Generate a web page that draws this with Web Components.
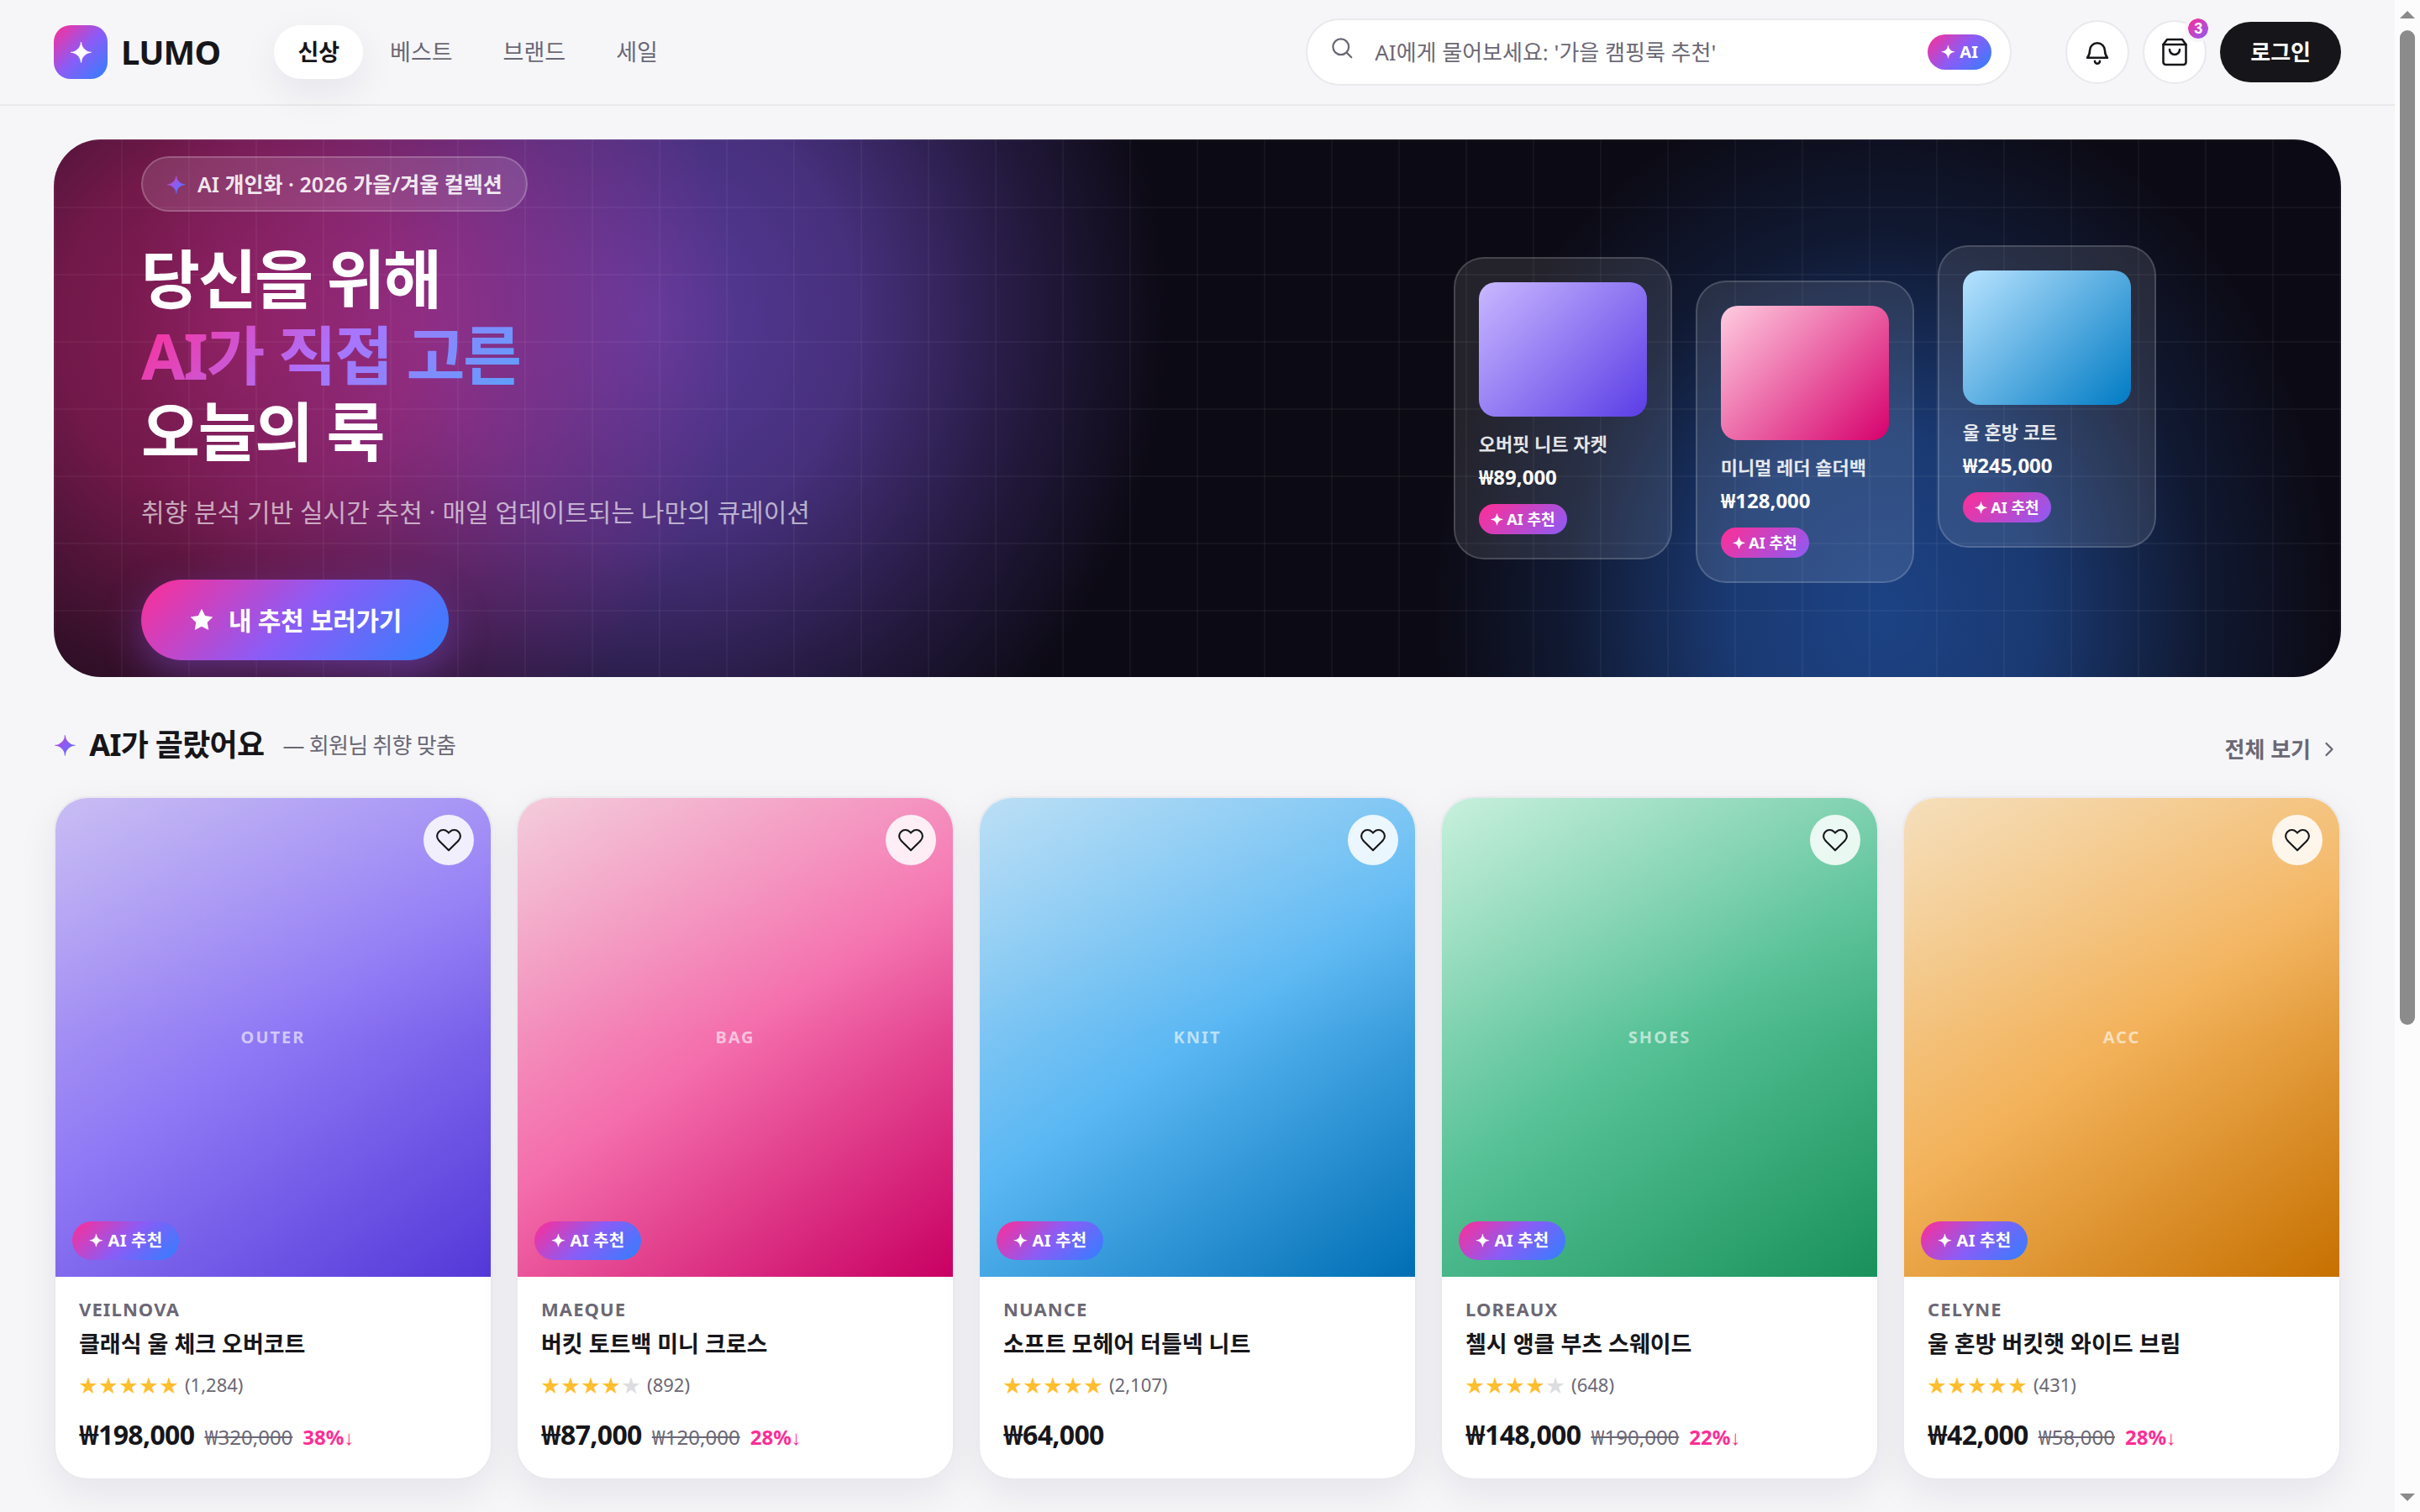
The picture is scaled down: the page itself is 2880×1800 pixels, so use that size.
<!DOCTYPE html>
<html lang="ko">
<head>
<meta charset="UTF-8">
<meta name="viewport" content="width=device-width, initial-scale=1.0">
<title>LUMO</title>
<style>
    :root {
        --ink: #16161a;
        --muted: #6b6875;
        --line: #e9e9ee;
        --bg: #f6f6f9;
        --pink: #ff2d95;
        --violet: #8b5cf6;
        --blue: #2f80ff;
        --grad: linear-gradient(135deg, #ff2d95 0%, #8b5cf6 50%, #2f80ff 100%);
        --shadow: 0 16px 48px rgba(20, 20, 40, 0.07);
    }
    body {
        margin: 0;
        height: 100vh;
        overflow: hidden;
        display: grid;
        grid-template-columns: minmax(0, 1fr) 30px;
        background: var(--bg);
        color: var(--ink);
        font-family: "Noto Sans", "Noto Sans CJK KR", sans-serif;
        font-size: 28px;
        line-height: 1.5;
    }
</style>
</head>
<body>
<lumo-shop></lumo-shop>
<scroll-rail></scroll-rail>

<script>
const BASE = `
    *, *::before, *::after { box-sizing: border-box; }
    button, input { font: inherit; color: inherit; border: 0; background: none; padding: 0; margin: 0; }
    button { cursor: pointer; }
    a { color: inherit; text-decoration: none; }
    h1, h2, h3, p { margin: 0; }
    svg { display: block; flex: none; }
`;

class BaseElement extends HTMLElement {
    constructor() {
        super();
        this.attachShadow({ mode: 'open' });
    }

    connectedCallback() {
        this.shadowRoot.innerHTML = `<style>${BASE}${this.styles()}</style>${this.markup()}`;
    }
}

// Gradient pill: size is "sm" (hero cards), "search", or nothing for products
class AiChip extends BaseElement {
    styles() {
        return `
            :host { display: inline-flex; align-items: center; border-radius: 999px; background: var(--grad); color: #fff; font-weight: 700; font-size: 20px; letter-spacing: 0.01em; height: 46px; padding: 0 20px; white-space: nowrap; }
            :host([size="sm"]) { font-size: 18px; letter-spacing: 0; height: 36px; padding: 0 14px; background: linear-gradient(135deg, var(--pink), var(--violet)); }
            :host([size="search"]) { height: 42px; padding: 0 16px; }
        `;
    }

    markup() {
        return `<span>✦ <slot></slot></span>`;
    }
}

class SiteHeader extends BaseElement {
    styles() {
        return `
            :host { display: flex; align-items: center; gap: 64px; padding: 22px 64px; border-bottom: 2px solid var(--line); }
            .logo { display: flex; align-items: center; gap: 16px; font-size: 40px; font-weight: 700; letter-spacing: -0.02em; line-height: 1; }
            .mark { display: grid; place-items: center; width: 64px; height: 64px; border-radius: 20px; background: var(--grad); color: #fff; font-size: 32px; letter-spacing: 0; }
            nav { display: flex; gap: 4px; margin-right: auto; }
            nav a { display: flex; align-items: center; height: 64px; padding: 0 28px; border-radius: 32px; font-size: 27px; color: var(--muted); }
            nav a.on { background: #fff; color: var(--ink); font-weight: 700; box-shadow: var(--shadow); }
            .search { display: flex; align-items: center; gap: 24px; width: 840px; height: 80px; padding: 0 22px 0 26px; border: 2px solid var(--line); border-radius: 40px; background: #fff; }
            .search svg { color: var(--muted); align-self: flex-start; margin-top: 18px; }
            .search input { flex: 1; min-width: 0; outline: 0; font-size: 26px; }
            .search input::placeholder { color: var(--muted); opacity: 1; }
            .actions { display: flex; align-items: center; gap: 16px; }
            .icon { position: relative; display: grid; place-items: center; width: 76px; height: 76px; border: 2px solid var(--line); border-radius: 50%; background: #fff; }
            .count { position: absolute; top: -8px; right: -8px; display: grid; place-items: center; width: 32px; height: 32px; border: 4px solid var(--bg); border-radius: 50%; background: linear-gradient(135deg, var(--pink), var(--violet)) padding-box; color: #fff; font-family: "Liberation Sans", sans-serif; font-size: 18px; font-weight: 700; line-height: 1; }
            .login { height: 72px; padding: 0 36px; border-radius: 36px; background: var(--ink); color: #fff; font-size: 26px; font-weight: 700; }
        `;
    }

    markup() {
        return `
            <a class="logo" href="#"><span class="mark">✦</span>LUMO</a>
            <nav>
                <a class="on" href="#">신상</a>
                <a href="#">베스트</a>
                <a href="#">브랜드</a>
                <a href="#">세일</a>
            </nav>
            <label class="search">
                <svg width="30" height="30" viewBox="0 0 24 24" fill="none" stroke="currentColor" stroke-width="1.8" stroke-linecap="round"><circle cx="11" cy="11" r="7.5"/><path d="m21 21-4.5-4.5"/></svg>
                <input type="search" aria-label="AI 검색" placeholder="AI에게 물어보세요: '가을 캠핑룩 추천'">
                <ai-chip size="search">AI</ai-chip>
            </label>
            <div class="actions">
                <button class="icon" aria-label="알림">
                    <svg width="36" height="36" viewBox="0 0 24 24" fill="none" stroke="currentColor" stroke-width="1.7" stroke-linecap="round" stroke-linejoin="round"><path d="M6 10.800a6 6 0 0 1 12 0c0 3 .7 4.200 2 5.700H4c1.300-1.500 2-2.700 2-5.700z"/><path d="M10 19.200a2 2 0 0 0 4 0"/></svg>
                </button>
                <button class="icon" aria-label="장바구니">
                    <svg width="36" height="36" viewBox="0 0 24 24" fill="none" stroke="currentColor" stroke-width="1.7" stroke-linecap="round" stroke-linejoin="round"><path d="M6 2 3 6v14a2 2 0 0 0 2 2h14a2 2 0 0 0 2-2V6l-3-4z"/><path d="M3 6h18"/><path d="M16 10a4 4 0 0 1-8 0"/></svg>
                    <span class="count">3</span>
                </button>
                <button class="login">로그인</button>
            </div>
        `;
    }
}

class PickCard extends BaseElement {
    styles() {
        return `
            :host { display: block; width: 260px; padding: 28px; border: 2px solid rgba(255, 255, 255, 0.16); border-radius: 36px; background: rgba(255, 255, 255, 0.1); color: #fff; }
            .thumb { height: 160px; margin-bottom: 14px; border-radius: 20px; background: linear-gradient(135deg, var(--from), var(--to)); }
            h3 { font-size: 22px; line-height: 36px; font-weight: 600; color: rgba(255, 255, 255, 0.88); white-space: nowrap; }
            p { margin: 4px 0 14px; font-size: 24px; line-height: 36px; font-weight: 700; }
            ai-chip { display: flex; width: fit-content; }
        `;
    }

    markup() {
        return `
            <div class="thumb"></div>
            <h3><slot></slot></h3>
            <p>${this.getAttribute('price')}</p>
            <ai-chip size="sm">AI 추천</ai-chip>
        `;
    }
}

class HeroBanner extends BaseElement {
    styles() {
        return `
            :host {
                display: grid; grid-template-columns: 1.3fr 1fr; gap: 56px; align-items: center;
                height: 640px; padding: 0 104px; border-radius: 56px; overflow: hidden; color: #fff;
                background:
                    linear-gradient(rgba(255, 255, 255, 0.04) 2px, transparent 2px) 0 0 / 80px 80px,
                    linear-gradient(90deg, rgba(255, 255, 255, 0.04) 2px, transparent 2px) 0 0 / 80px 80px,
                    radial-gradient(600px 600px at 8% 35%, rgba(255, 45, 149, 0.5), rgba(255, 45, 149, 0.42) 35%, rgba(255, 45, 149, 0.16) 72%, rgba(255, 45, 149, 0)),
                    radial-gradient(620px 660px at 26% 33%, rgba(139, 92, 246, 0.6), rgba(139, 92, 246, 0.46) 40%, rgba(139, 92, 246, 0.18) 74%, rgba(139, 92, 246, 0)),
                    radial-gradient(540px 640px at 80% 88%, rgba(47, 128, 255, 0.48), rgba(47, 128, 255, 0.4) 34%, rgba(47, 128, 255, 0.13) 70%, rgba(47, 128, 255, 0)),
                    #0c0a14;
            }
            .tag { display: flex; align-items: center; gap: 14px; width: fit-content; height: 66px; padding: 0 28px; border: 2px solid rgba(255, 255, 255, 0.2); border-radius: 33px; background: rgba(255, 255, 255, 0.12); color: rgba(255, 255, 255, 0.9); font-size: 25px; line-height: 30px; font-weight: 600; }
            .tag i { font-style: normal; font-size: 28px; line-height: 1; background: var(--grad); background-clip: text; color: transparent; }
            h1 { margin: 34px 0 28px; font-size: 76px; line-height: 91px; font-weight: 700; letter-spacing: -0.03em; }
            h1 span { display: block; width: fit-content; background: linear-gradient(135deg, #ff2d95, #a974ff 50%, #5aa2ff); background-clip: text; color: transparent; }
            .copy { margin-bottom: 58px; font-size: 30px; line-height: 45px; color: rgba(255, 255, 255, 0.65); }
            .cta { display: flex; align-items: center; gap: 16px; height: 96px; padding: 0 56px; border-radius: 48px; background: var(--grad); font-size: 30px; font-weight: 700; letter-spacing: -0.01em; box-shadow: 0 16px 48px rgba(139, 92, 246, 0.4); }
            .picks { display: flex; justify-content: center; align-items: flex-start; gap: 28px; padding-top: 14px; }
            pick-card:nth-child(1) { margin-top: 14px; --from: #c9b8ff; --to: #5b3de6; }
            pick-card:nth-child(2) { margin-top: 42px; --from: #ffcce0; --to: #d6006c; }
            pick-card:nth-child(3) { --from: #b8e3ff; --to: #007bc4; }
        `;
    }

    markup() {
        return `
            <div>
                <div class="tag"><i>✦</i>AI 개인화 · 2026 가을/겨울 컬렉션</div>
                <h1>당신을 위해<span>AI가 직접 고른</span>오늘의 룩</h1>
                <p class="copy">취향 분석 기반 실시간 추천 · 매일 업데이트되는 나만의 큐레이션</p>
                <button class="cta">
                    <svg width="32" height="32" viewBox="0 0 24 24" fill="currentColor"><path d="m12 2 3.100 6.300 6.900 1-5 4.900 1.200 6.800-6.200-3.200L5.800 21 7 14.200 2 9.300l6.900-1z"/></svg>
                    내 추천 보러가기
                </button>
            </div>
            <div class="picks">
                <pick-card price="₩89,000">오버핏 니트 자켓</pick-card>
                <pick-card price="₩128,000">미니멀 레더 숄더백</pick-card>
                <pick-card price="₩245,000">울 혼방 코트</pick-card>
            </div>
        `;
    }
}

class ProductCard extends BaseElement {
    styles() {
        return `
            :host { display: block; border: 2px solid var(--line); border-radius: 40px; background: #fff; overflow: hidden; box-shadow: var(--shadow); }
            .photo { position: relative; display: grid; place-items: center; aspect-ratio: 1 / 1.1; background: linear-gradient(rgba(255, 255, 255, 0.12), transparent 50%), linear-gradient(145deg, var(--from), var(--mid) 50%, var(--to)); color: rgba(255, 255, 255, 0.6); font-size: 20px; font-weight: 700; letter-spacing: 0.1em; }
            .like { position: absolute; top: 20px; right: 20px; display: grid; place-items: center; width: 60px; height: 60px; border-radius: 50%; background: rgba(255, 255, 255, 0.85); color: var(--ink); }
            ai-chip { position: absolute; left: 20px; bottom: 20px; }
            .info { padding: 20px 28px 28px; }
            .brand { font-size: 22px; line-height: 36px; font-weight: 700; letter-spacing: 0.05em; color: var(--muted); }
            h3 { margin-top: 4px; font-size: 27px; line-height: 40px; font-weight: 600; white-space: nowrap; }
            .rating { display: flex; align-items: center; gap: 6px; margin-top: 10px; font-size: 22px; line-height: 36px; color: var(--muted); }
            .stars { color: #ffbe2e; letter-spacing: 2px; }
            .stars i { font-style: normal; color: #dddde0; }
            .price { display: flex; align-items: baseline; gap: 12px; height: 48px; margin-top: 18px; line-height: 48px; font-size: 24px; }
            .price strong { font-size: 32px; font-weight: 700; letter-spacing: -0.02em; }
            .price s { color: var(--muted); }
            .price em { font-family: "Noto Sans", "Liberation Sans", sans-serif; font-style: normal; font-weight: 700; color: var(--pink); }
        `;
    }

    markup() {
        const attr = (name) => this.getAttribute(name);
        const stars = Number(attr('stars'));
        const old = attr('old') ? `<s>${attr('old')}</s><em>${attr('off')}↓</em>` : '';
        return `
            <div class="photo">
                ${attr('kind')}
                <button class="like" aria-label="찜하기">
                    <svg width="32" height="32" viewBox="0 0 24 24" fill="none" stroke="currentColor" stroke-width="1.6" stroke-linejoin="round"><path d="M20.800 4.600a5.500 5.500 0 0 0-7.800 0L12 5.700l-1-1.100a5.500 5.500 0 0 0-7.800 7.800l1 1.100L12 21.200l7.800-7.700 1-1.100a5.500 5.500 0 0 0 0-7.800z"/></svg>
                </button>
                <ai-chip>AI 추천</ai-chip>
            </div>
            <div class="info">
                <div class="brand">${attr('brand')}</div>
                <h3><slot></slot></h3>
                <div class="rating"><span class="stars">${'★'.repeat(stars)}<i>${'★'.repeat(5 - stars)}</i></span>(${attr('reviews')})</div>
                <div class="price"><strong>${attr('price')}</strong>${old}</div>
            </div>
        `;
    }
}

class ProductRow extends BaseElement {
    styles() {
        return `
            :host { display: block; }
            header { display: flex; justify-content: space-between; align-items: flex-end; margin-bottom: 36px; }
            h2 { display: flex; align-items: center; font-size: 36px; line-height: 50px; font-weight: 700; letter-spacing: -0.02em; }
            h2 i { margin-right: 16px; font-style: normal; font-size: 32px; background: var(--grad); background-clip: text; color: transparent; }
            h2 small { margin-left: 22px; font-size: 26px; font-weight: 400; color: var(--muted); }
            a { display: flex; align-items: center; gap: 8px; font-size: 26px; line-height: 40px; font-weight: 600; color: var(--muted); }
            .grid { display: grid; grid-template-columns: repeat(5, minmax(0, 1fr)); gap: 28px; }
        `;
    }

    markup() {
        return `
            <header>
                <h2><i>✦</i>AI가 골랐어요<small>— 회원님 취향 맞춤</small></h2>
                <a href="#">전체 보기
                    <svg width="28" height="28" viewBox="0 0 24 24" fill="none" stroke="currentColor" stroke-width="2" stroke-linecap="round" stroke-linejoin="round"><path d="m9 18 6-6-6-6"/></svg>
                </a>
            </header>
            <div class="grid"><slot></slot></div>
        `;
    }
}

class LumoShop extends BaseElement {
    styles() {
        return `
            :host { display: block; min-width: 0; }
            main { display: grid; gap: 56px; padding: 40px 64px; }
            .violet { --from: #c2b4f2; --mid: #8f78f5; --to: #5438d8; }
            .pink { --from: #f2c5d6; --mid: #f46dac; --to: #c80062; }
            .sky { --from: #b3dbf4; --mid: #5ab7f3; --to: #006eb4; }
            .green { --from: #c0eed8; --mid: #56c196; --to: #19915b; }
            .amber { --from: #f4dbb3; --mid: #f3b25a; --to: #c67000; }
        `;
    }

    markup() {
        return `
            <site-header></site-header>
            <main>
                <hero-banner></hero-banner>
                <product-row>
                    <product-card class="violet" kind="OUTER" brand="VEILNOVA" stars="5" reviews="1,284" price="₩198,000" old="₩320,000" off="38%">클래식 울 체크 오버코트</product-card>
                    <product-card class="pink" kind="BAG" brand="MAEQUE" stars="4" reviews="892" price="₩87,000" old="₩120,000" off="28%">버킷 토트백 미니 크로스</product-card>
                    <product-card class="sky" kind="KNIT" brand="NUANCE" stars="5" reviews="2,107" price="₩64,000">소프트 모헤어 터틀넥 니트</product-card>
                    <product-card class="green" kind="SHOES" brand="LOREAUX" stars="4" reviews="648" price="₩148,000" old="₩190,000" off="22%">첼시 앵클 부츠 스웨이드</product-card>
                    <product-card class="amber" kind="ACC" brand="CELYNE" stars="5" reviews="431" price="₩42,000" old="₩58,000" off="28%">울 혼방 버킷햇 와이드 브림</product-card>
                </product-row>
            </main>
        `;
    }
}

class ScrollRail extends BaseElement {
    styles() {
        return `
            :host { display: flex; flex-direction: column; align-items: center; background: #fcfcfc; padding: 13px 0 15px; gap: 14px; color: #8b8b8b; }
            .track { flex: 1; width: 18px; }
            .thumb { height: 68.5%; border-radius: 9px; background: currentColor; }
        `;
    }

    markup() {
        return `
            <svg width="18" height="9" viewBox="0 0 18 9" fill="currentColor"><path d="M9 0l9 9H0z"/></svg>
            <div class="track"><div class="thumb"></div></div>
            <svg width="18" height="9" viewBox="0 0 18 9" fill="currentColor"><path d="M0 0h18L9 9z"/></svg>
        `;
    }
}

customElements.define('ai-chip', AiChip);
customElements.define('site-header', SiteHeader);
customElements.define('pick-card', PickCard);
customElements.define('hero-banner', HeroBanner);
customElements.define('product-card', ProductCard);
customElements.define('product-row', ProductRow);
customElements.define('lumo-shop', LumoShop);
customElements.define('scroll-rail', ScrollRail);
</script>
</body>
</html>
